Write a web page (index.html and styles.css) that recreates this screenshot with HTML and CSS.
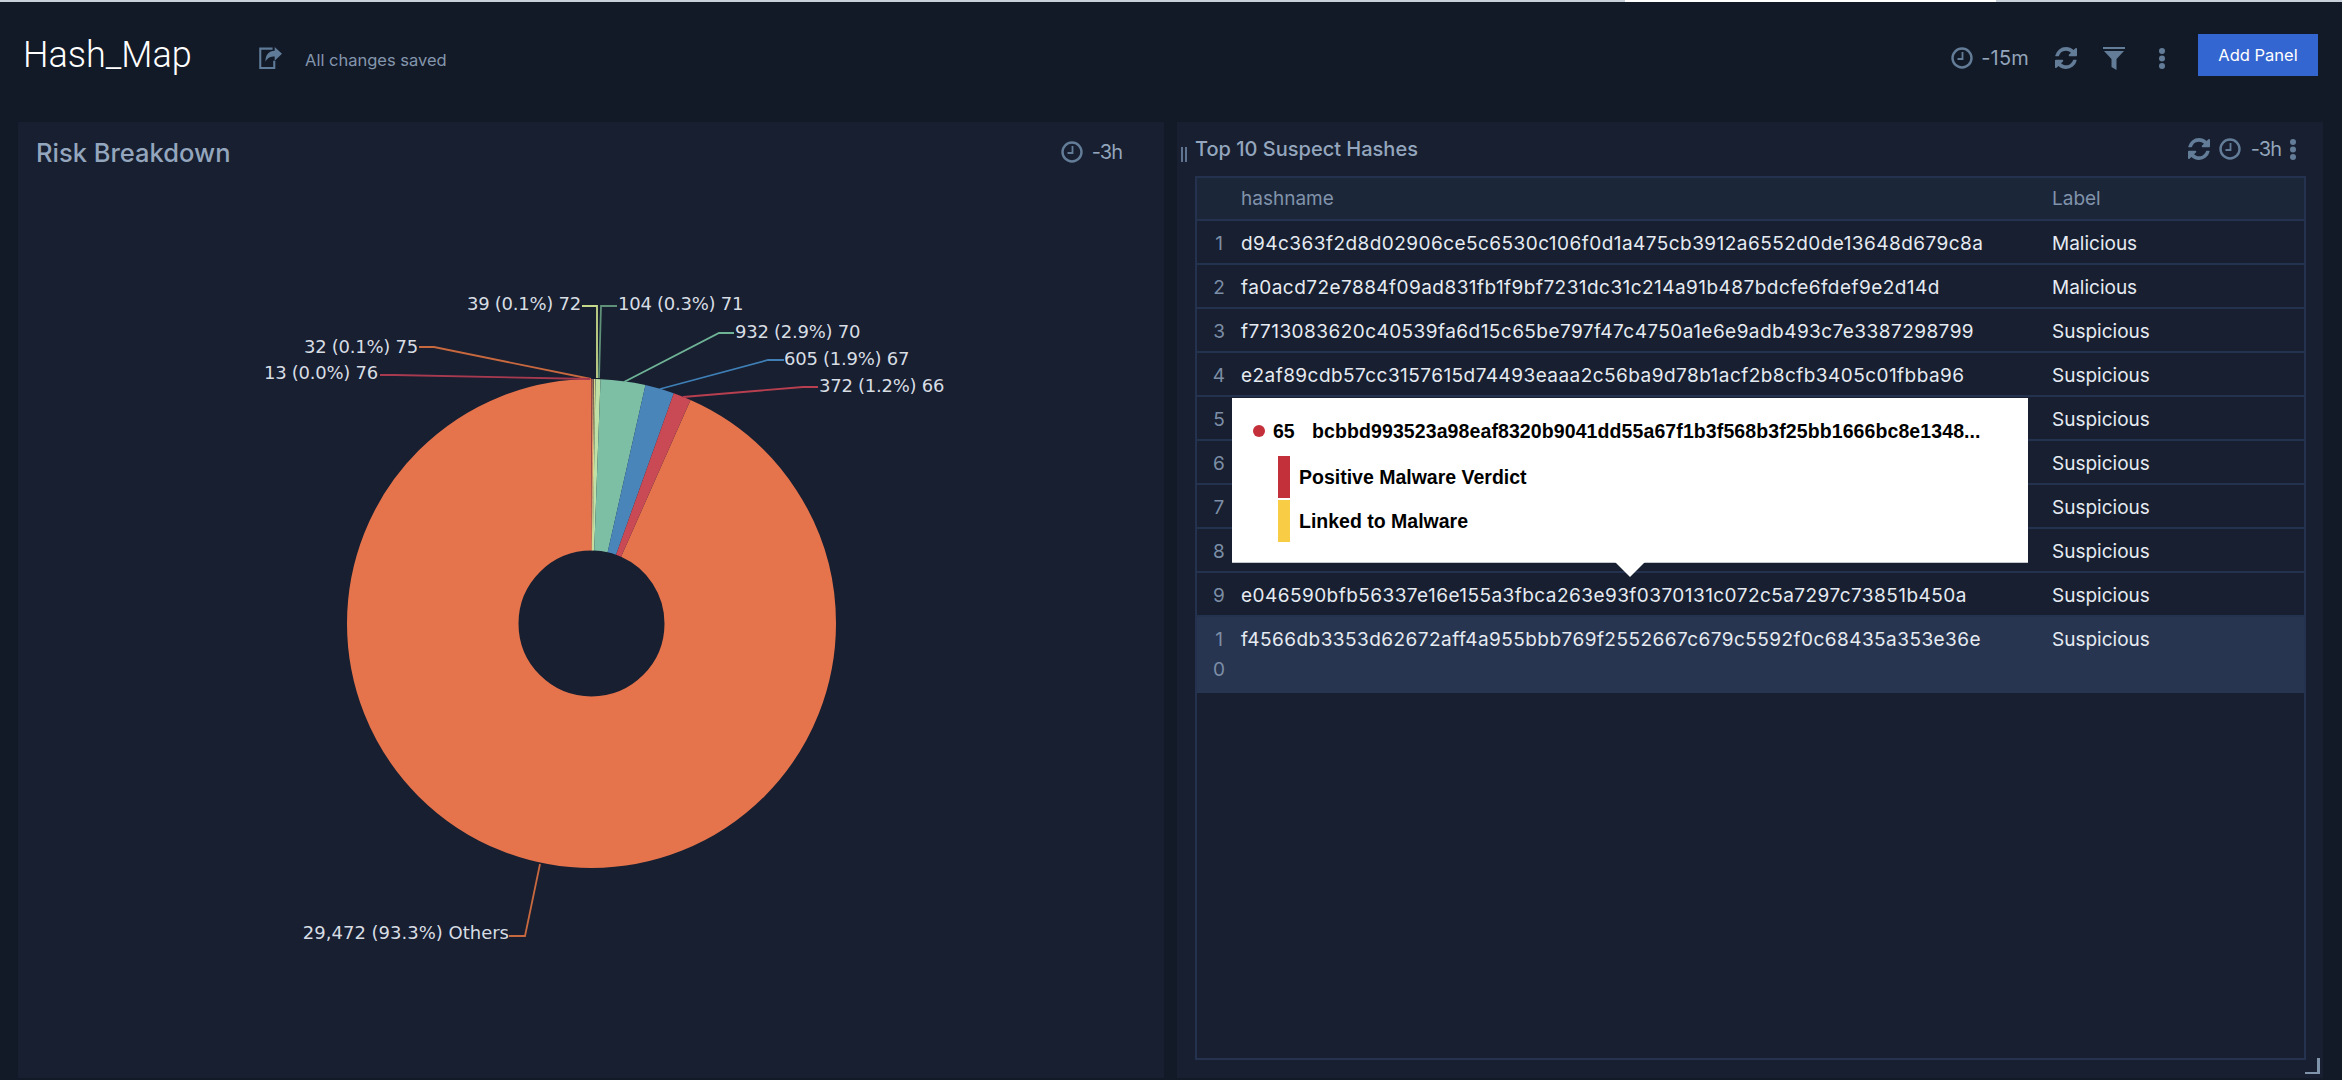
FILE: index.html
```html
<!DOCTYPE html>
<html lang="en">
<head>
<meta charset="UTF-8">
<title>Hash_Map</title>
<link rel="stylesheet" href="styles.css">
</head>
<body>

<svg class="icon-defs" width="0" height="0">
<defs>
<symbol id="i-clock" viewBox="0 0 22 22">
<circle cx="11" cy="11" r="9.5" fill="none" stroke="currentColor" stroke-width="2.4"/>
<path d="M11.5 5v7H6.5" fill="none" stroke="currentColor" stroke-width="1.8"/>
</symbol>
<symbol id="i-refresh" viewBox="128 128 1536 1536">
<path fill="currentColor" d="M1639 1056q0 5-1 7-64 268-268 434.5t-478 166.5q-146 0-282.5-55t-243.5-157l-129 129q-19 19-45 19t-45-19-19-45v-448q0-26 19-45t45-19h448q26 0 45 19t19 45-19 45l-137 137q71 66 161 102t187 36q134 0 250-65t186-179q11-17 53-117 8-23 30-23h192q13 0 22.5 9.5t9.5 22.5zm25-800v448q0 26-19 45t-45 19h-448q-26 0-45-19t-19-45 19-45l138-138q-148-137-349-137-134 0-250 65t-186 179q-11 17-53 117-8 23-30 23h-199q-13 0-22.5-9.5t-9.5-22.5v-7q65-268 270-434.5t480-166.5q146 0 284 55.5t245 156.5l130-129q19-19 45-19t45 19 19 45z"/>
</symbol>
<symbol id="i-dots" viewBox="0 0 6 21">
<circle cx="3" cy="3" r="3" fill="currentColor"/>
<circle cx="3" cy="10.500" r="3" fill="currentColor"/>
<circle cx="3" cy="18" r="3" fill="currentColor"/>
</symbol>
</defs>
</svg>

<div class="top-strip"><div class="top-strip-white"></div></div>

<header class="page-header">
<h1 class="page-title">Hash_Map</h1>
<svg class="share-icon" viewBox="0 0 22 22">
<path d="M13 2.5H1.2v18.6h13.4V14" fill="none" stroke="currentColor" stroke-width="2"/>
<path d="M22 7.500 15 1v3.600C9.500 4.800 6 8.500 6.200 15c2-3.800 5-5 8.800-5v4z" fill="currentColor"/>
</svg>
<span class="save-status">All changes saved</span>
<div class="header-tools">
<svg class="icon icon-clock"><use href="#i-clock"/></svg>
<span class="time-range">-15m</span>
<svg class="icon icon-refresh"><use href="#i-refresh"/></svg>
<svg class="icon icon-filter" viewBox="0 0 22 23">
<path fill="currentColor" d="M0 0h22v2H0zM1 4h20l-7.500 8v11l-5-3v-8z"/>
</svg>
<svg class="icon icon-dots"><use href="#i-dots"/></svg>
<button class="add-panel">Add Panel</button>
</div>
</header>

<main class="dashboard">

<section class="panel">
<div class="panel-head panel-head-left">
<h2 class="risk-title">Risk Breakdown</h2>
<div class="panel-time">
<svg class="icon icon-clock"><use href="#i-clock"/></svg>
<span>-3h</span>
</div>
</div>
<svg class="pie" viewBox="0 0 1146 880">
<g transform="translate(-18 -196)">
<g fill="none" stroke-width="171.500" transform="rotate(-90 591.500 623.500)">
<circle cx="591.500" cy="623.500" r="158.750" pathLength="31569" stroke="#e5744d" stroke-dasharray="29472 31569" stroke-dashoffset="-2097"/>
<circle cx="591.500" cy="623.500" r="158.750" pathLength="31569" stroke="#b93c50" stroke-dasharray="13 31569"/>
<circle cx="591.500" cy="623.500" r="158.750" pathLength="31569" stroke="#e39a6d" stroke-dasharray="32 31569" stroke-dashoffset="-13"/>
<circle cx="591.500" cy="623.500" r="158.750" pathLength="31569" stroke="#d9d68c" stroke-dasharray="39 31569" stroke-dashoffset="-45"/>
<circle cx="591.500" cy="623.500" r="158.750" pathLength="31569" stroke="#bfe0a6" stroke-dasharray="104 31569" stroke-dashoffset="-84"/>
<circle cx="591.500" cy="623.500" r="158.750" pathLength="31569" stroke="#7dbfa5" stroke-dasharray="932 31569" stroke-dashoffset="-188"/>
<circle cx="591.500" cy="623.500" r="158.750" pathLength="31569" stroke="#4a85ba" stroke-dasharray="605 31569" stroke-dashoffset="-1120"/>
<circle cx="591.500" cy="623.500" r="158.750" pathLength="31569" stroke="#c94a55" stroke-dasharray="372 31569" stroke-dashoffset="-1725"/>
</g>
<g fill="none" stroke-width="1.800">
<path d="M582 306h15v72" stroke="#c6d98a"/>
<path d="M617 306h-16l-2 72" stroke="#5f9078"/>
<path d="M734 333h-15l-95 49" stroke="#6fb397"/>
<path d="M784 360h-16l-108 29" stroke="#3f7fb5"/>
<path d="M818 387h-15l-120 10" stroke="#b83f50"/>
<path d="M419 347h15l157 32" stroke="#c8683f"/>
<path d="M380 375h15l195 4" stroke="#a83a50"/>
<path d="M509 936h16l15-72" stroke="#c8683f"/>
</g>
<g class="pie-labels">
<text x="581" y="310" text-anchor="end">39 (0.1%) 72</text>
<text x="618" y="310">104 (0.3%) 71</text>
<text x="735" y="338">932 (2.9%) 70</text>
<text x="784" y="365">605 (1.9%) 67</text>
<text x="819" y="392">372 (1.2%) 66</text>
<text x="418" y="353" text-anchor="end">32 (0.1%) 75</text>
<text x="378" y="379" text-anchor="end">13 (0.0%) 76</text>
<text class="label-others" x="509" y="939" text-anchor="end">29,472 (93.3%) Others</text>
</g>
</g>
</svg>
</section>

<section class="panel">
<div class="panel-head panel-head-right">
<span class="drag-handle"></span>
<h2 class="table-title">Top 10 Suspect Hashes</h2>
<div class="panel-time">
<svg class="icon icon-refresh"><use href="#i-refresh"/></svg>
<svg class="icon icon-clock"><use href="#i-clock"/></svg>
<span>-3h</span>
<svg class="icon icon-dots"><use href="#i-dots"/></svg>
</div>
</div>
<div class="table-wrap">
<table class="hash-table">
<colgroup>
<col class="col-num">
<col class="col-hash">
<col>
</colgroup>
<thead>
<tr><th></th><th>hashname</th><th>Label</th></tr>
</thead>
<tbody>
<tr><td class="num">1</td><td class="hash">d94c363f2d8d02906ce5c6530c106f0d1a475cb3912a6552d0de13648d679c8a</td><td>Malicious</td></tr>
<tr><td class="num">2</td><td class="hash">fa0acd72e7884f09ad831fb1f9bf7231dc31c214a91b487bdcfe6fdef9e2d14d</td><td>Malicious</td></tr>
<tr><td class="num">3</td><td class="hash">f7713083620c40539fa6d15c65be797f47c4750a1e6e9adb493c7e3387298799</td><td>Suspicious</td></tr>
<tr><td class="num">4</td><td class="hash">e2af89cdb57cc3157615d74493eaaa2c56ba9d78b1acf2b8cfb3405c01fbba96</td><td>Suspicious</td></tr>
<tr><td class="num">5</td><td class="hash"></td><td>Suspicious</td></tr>
<tr><td class="num">6</td><td class="hash"></td><td>Suspicious</td></tr>
<tr><td class="num">7</td><td class="hash"></td><td>Suspicious</td></tr>
<tr><td class="num">8</td><td class="hash"></td><td>Suspicious</td></tr>
<tr><td class="num">9</td><td class="hash">e046590bfb56337e16e155a3fbca263e93f0370131c072c5a7297c73851b450a</td><td>Suspicious</td></tr>
<tr class="selected"><td class="num">10</td><td class="hash">f4566db3353d62672aff4a955bbb769f2552667c679c5592f0c68435a353e36e</td><td>Suspicious</td></tr>
</tbody>
</table>
</div>
<div class="tooltip">
<div class="tooltip-head">
<span class="tooltip-dot"></span>
<span class="tooltip-num">65</span>
<span class="tooltip-hash">bcbbd993523a98eaf8320b9041dd55a67f1b3f568b3f25bb1666bc8e1348...</span>
</div>
<div class="tooltip-item tooltip-red">Positive Malware Verdict</div>
<div class="tooltip-item tooltip-yellow">Linked to Malware</div>
</div>
<div class="resize-handle"></div>
</section>

</main>

</body>
</html>
```

FILE: styles.css
```css
* {
  box-sizing: border-box;
}

html, body {
  height: 100%;
}

body {
  margin: 0;
  background-color: #131a27;
  color: #e6ebf2;
  font-family: 'Inter', 'Liberation Sans', sans-serif;
  display: flex;
  flex-direction: column;
  overflow: hidden;
}

.icon-defs {
  position: absolute;
}

.top-strip {
  height: 2px;
  background-color: #c8d0da;
  flex: none;
}

.top-strip-white {
  height: 2px;
  width: 371px;
  margin-left: 1625px;
  background-color: #fff;
}

.page-header {
  flex: none;
  height: 120px;
  display: flex;
  align-items: flex-start;
  padding: 32px 24px 0 23px;
}

.page-title {
  margin: 0;
  width: 236px;
  font-family: 'Roboto', sans-serif;
  font-weight: 300;
  font-size: 36px;
  line-height: 42px;
  color: #fff;
}

.share-icon {
  width: 23px;
  height: 23px;
  margin-top: 12px;
  color: #5f7b98;
}

.save-status {
  margin: 14px 0 0 23px;
  font-size: 16.500px;
  line-height: 24px;
  color: #8496ad;
}

.header-tools {
  margin-left: auto;
  display: flex;
  align-items: center;
  height: 42px;
}

.icon {
  display: block;
  flex: none;
  color: #637d99;
}

.icon-clock {
  width: 22px;
  height: 22px;
}

.icon-refresh {
  width: 22px;
  height: 22px;
}

.icon-filter {
  width: 22px;
  height: 23px;
}

.icon-dots {
  width: 6px;
  height: 21px;
}

.header-tools .icon {
  margin-top: 6px;
}

.time-range {
  margin: 6px 26px 0 8px;
  font-size: 20px;
  letter-spacing: 0.2px;
  color: #93a5bb;
}

.header-tools .icon-filter {
  margin-left: 26px;
}

.header-tools .icon-dots {
  margin-left: 34px;
}

.add-panel {
  width: 120px;
  height: 42px;
  margin-left: 33px;
  border: none;
  background-color: #3366d0;
  color: #fff;
  font-family: inherit;
  font-size: 16.500px;
}

.dashboard {
  flex: 1;
  min-height: 0;
  display: grid;
  grid-template-columns: 1146px 1146px;
  column-gap: 13px;
  padding: 0 0 2px 18px;
}

.panel {
  position: relative;
  display: flex;
  flex-direction: column;
  min-height: 0;
  background-color: #171f30;
}

.panel-head {
  flex: none;
  display: flex;
  align-items: center;
}

.panel-head-left {
  height: 60px;
  padding: 0 42px 0 18px;
}

.panel-head-right {
  height: 54px;
  padding: 0 27px 0 4px;
}

.risk-title {
  margin: 0;
  font-size: 25.500px;
  font-weight: 500;
  color: #94a6bd;
}

.table-title {
  margin: 0;
  font-size: 20px;
  font-weight: 500;
  color: #94a6bd;
}

.drag-handle {
  width: 6px;
  height: 15px;
  margin: 10px 8px 0 0;
  border-left: 2px solid #5f7390;
  border-right: 2px solid #5f7390;
}

.panel-time {
  margin-left: auto;
  display: flex;
  align-items: center;
  font-size: 20px;
  letter-spacing: -1px;
  color: #93a5bb;
}

.panel-head-left .panel-time .icon-clock {
  margin-right: 9px;
}

.panel-head-right .panel-time .icon-clock {
  margin: 0 10px 0 9px;
}

.panel-head-right .panel-time .icon-dots {
  margin-left: 9px;
}

.pie {
  display: block;
  position: absolute;
  left: 0;
  top: 74px;
  width: 1146px;
  height: 880px;
}

.pie-labels text {
  font-family: 'DejaVu Sans', sans-serif;
  font-size: 18px;
  letter-spacing: -0.25px;
  fill: #d8dde4;
}

.pie-labels .label-others {
  letter-spacing: 0;
}

.table-wrap {
  flex: 1;
  margin: 0 17px 18px 18px;
  border: 2px solid #25324f;
  min-height: 0;
}

.hash-table {
  width: 100%;
  border-collapse: collapse;
  table-layout: fixed;
  font-size: 19px;
  line-height: 30px;
}

.col-num {
  width: 44px;
}

.col-hash {
  width: 811px;
}

.hash-table th {
  height: 42px;
  padding: 1px 0 0 0;
  background-color: #1c2639;
  border-bottom: 2px solid #25324f;
  color: #8093ab;
  font-weight: 400;
  text-align: left;
}

.hash-table td {
  height: 44px;
  padding: 8px 0 4px 0;
  border-bottom: 2px solid #25324f;
  vertical-align: top;
  white-space: nowrap;
}

.hash-table td.hash {
  letter-spacing: 0.450px;
}

.hash-table td.num {
  padding: 8px 14px 4px 14px;
  color: #7c8ea6;
  text-align: center;
  white-space: normal;
  word-break: break-all;
}

.hash-table .selected td {
  padding-bottom: 8px;
  background-color: #273550;
  border-bottom: none;
}

.tooltip {
  position: absolute;
  left: 55px;
  top: 276px;
  width: 796px;
  height: 165px;
  padding: 23px 0 0 21px;
  background-color: #fff;
  border-bottom: 1px solid #c4c8ce;
  color: #000;
  font-family: 'Liberation Sans', sans-serif;
  font-size: 19.500px;
  font-weight: 700;
}

.tooltip::after {
  content: '';
  position: absolute;
  left: 383px;
  top: 164px;
  border-left: 15px solid transparent;
  border-right: 15px solid transparent;
  border-top: 15px solid #fff;
}

.tooltip-head {
  display: flex;
  align-items: center;
  height: 20px;
  margin-bottom: 15px;
}

.tooltip-dot {
  width: 12px;
  height: 12px;
  border-radius: 50%;
  background-color: #c4303a;
  margin-right: 8px;
}

.tooltip-num {
  width: 39px;
}

.tooltip-hash {
  letter-spacing: 0.100px;
}

.tooltip-item {
  height: 42px;
  line-height: 43px;
  margin: 0 0 2px 25px;
  padding-left: 9px;
  border-left: 12px solid;
}

.tooltip-red {
  border-left-color: #c4303a;
}

.tooltip-yellow {
  border-left-color: #f9cc45;
}

.resize-handle {
  position: absolute;
  right: 3px;
  bottom: 4px;
  width: 15px;
  height: 16px;
  border-right: 3px solid #7f93ab;
  border-bottom: 2px solid #7f93ab;
}
```
